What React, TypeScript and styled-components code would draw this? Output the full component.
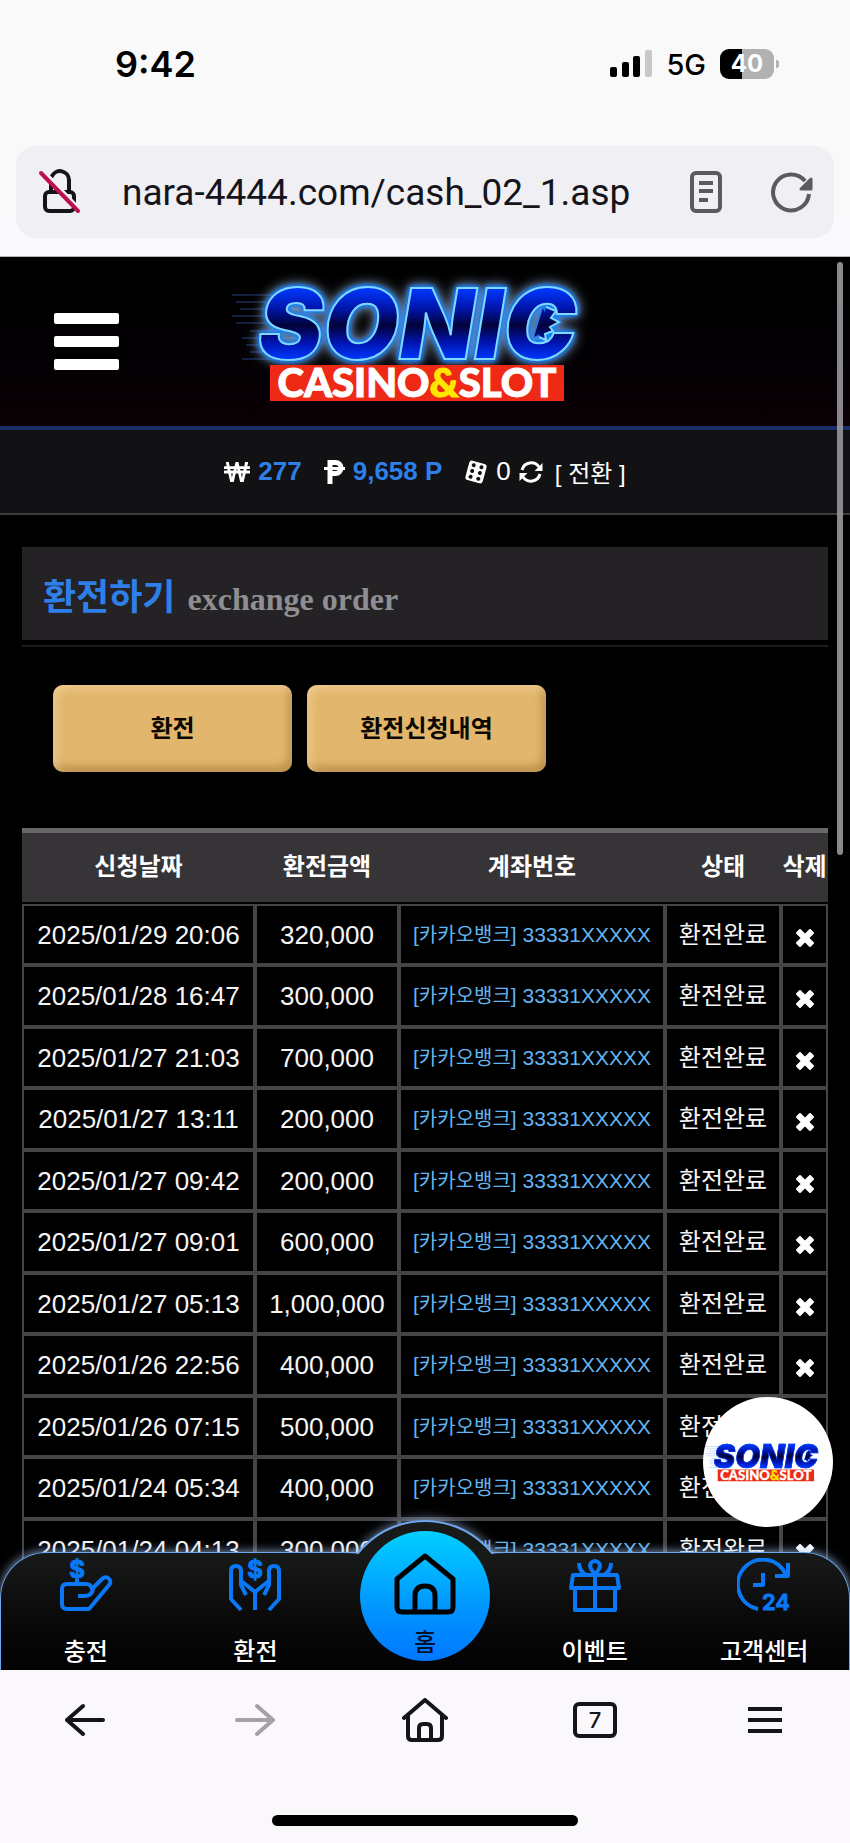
import React, { useId } from "react";
import styled, { createGlobalStyle } from "styled-components";
import { FaWonSign } from "react-icons/fa";

const GlobalStyle = createGlobalStyle`
  *, *::before, *::after { box-sizing: border-box; }
  body {
    margin: 0;
    background: #fbf8fc;
    font-family: "Liberation Sans", "Noto Sans CJK KR", sans-serif;
  }
  button, input { font: inherit; color: inherit; border: 0; padding: 0; margin: 0; background: none; }
  a { color: inherit; text-decoration: none; }
  svg { display: block; flex: none; }
`;

const Phone = styled.div`
  display: flex;
  flex-direction: column;
  min-height: 100vh;
`;

/* ---------- system status bar and address bar ---------- */

const TopChrome = styled.header`
  background: linear-gradient(#f9f9f9, #f9f9f9 70%, #fafafe);
  border-bottom: 1px solid #b4b3b8;
  font-family: Inter, "Noto Sans CJK KR", sans-serif;
`;

const StatusBar = styled.div`
  display: flex;
  align-items: center;
  justify-content: space-between;
  height: 128px;
  padding: 0 76px 0 115px;
  color: #000;
`;

const Clock = styled.time`
  font-size: 36px;
  font-weight: 600;
`;

const StatusIcons = styled.div`
  display: flex;
  align-items: center;
  gap: 14px;
`;

const Network = styled.span`
  font-size: 29px;
  font-weight: 500;
`;

const Battery = styled.div`
  position: relative;
  display: grid;
  place-items: center;
  width: 54px;
  height: 30px;
  border-radius: 9px;
  background: linear-gradient(90deg, #000 40%, #b1b1b1 40%);
  color: #fff;
  font-size: 24px;
  font-weight: 700;
  line-height: 30px;

  &::after {
    content: "";
    position: absolute;
    left: 56px;
    top: 11px;
    width: 3px;
    height: 8px;
    border-radius: 0 3px 3px 0;
    background: #b1b1b1;
  }
`;

const AddressRow = styled.div`
  padding: 18px 16px;
`;

const AddressBar = styled.form`
  display: flex;
  align-items: center;
  height: 92px;
  padding: 0 20px 0 22px;
  border-radius: 20px;
  background: #f0eff4;
  color: #5b5a60;
`;

const UrlInput = styled.input`
  flex: 1;
  min-width: 0;
  margin: 0 16px 0 40px;
  color: #15141a;
  font-family: Roboto, sans-serif;
  font-size: 37px;
  outline: 0;
`;

const IconButton = styled.button`
  display: grid;
  place-items: center;
  cursor: pointer;
`;

const ReaderButton = styled(IconButton)`
  margin-right: 48px;
`;

/* ---------- the casino page ---------- */

const Site = styled.div`
  position: relative;
  flex: 1;
  padding-bottom: 88px;
  background: #000;
  color: #fff;
  overflow: hidden;
`;

const ScrollThumb = styled.div`
  position: absolute;
  top: 5px;
  right: 7px;
  width: 6px;
  height: 42%;
  border-radius: 3px;
  background: rgba(160, 159, 163, 0.85);
  z-index: 5;
`;

const SiteHeader = styled.div`
  display: grid;
  grid-template-columns: 1fr auto 1fr;
  align-items: center;
  height: 173px;
  padding: 0 54px;
  background: linear-gradient(#000, #030003 60%, #0b0005);
  border-bottom: 4px solid #182c66;
`;

const MenuButton = styled.button`
  display: flex;
  flex-direction: column;
  justify-self: start;
  gap: 12px;
  width: 65px;
  cursor: pointer;
`;

const MenuBar = styled.span`
  height: 11px;
  border-radius: 2px;
  background: #fff;
`;

const AccountBar = styled.div`
  display: flex;
  align-items: center;
  justify-content: center;
  height: 85px;
  background: #121114;
  border-bottom: 2px solid #3c3b3e;
  font-size: 26px;
`;

const Balance = styled.span`
  display: flex;
  align-items: center;
  gap: 8px;
  margin-right: 22px;
`;

const Amount = styled.strong`
  color: #2e7fe8;
`;

const ConvertButton = styled.button`
  display: flex;
  align-items: center;
  gap: 12px;
  margin-left: -14px;
  font-size: 24px;
  cursor: pointer;
`;

const Content = styled.main`
  padding: 32px 22px 0;
`;

const TitlePanel = styled.div`
  display: flex;
  align-items: baseline;
  gap: 12px;
  padding: 24px 21px 16px;
  height: 93px;
  background: #242225;
`;

const Title = styled.h1`
  margin: 0;
  color: #2e7fe8;
  font-size: 36px;
  line-height: 53px;
  font-weight: 700;
`;

const Subtitle = styled.span`
  color: #8f8e91;
  font-family: "Liberation Serif", serif;
  font-size: 32px;
  font-weight: 700;
`;

const Rule = styled.hr`
  height: 2px;
  margin: 5px 0 38px;
  border: 0;
  background: #1c1b1d;
`;

const Tabs = styled.div`
  display: flex;
  gap: 15px;
  padding: 0 31px;
  margin-bottom: 56px;
`;

const TabButton = styled.button`
  flex: 0 1 239px;
  height: 87px;
  padding-bottom: 5px;
  border-radius: 10px;
  background: #e2b66c;
  box-shadow: inset 4px 4px 8px rgba(255, 225, 180, 0.5), inset -3px -5px 8px rgba(120, 80, 20, 0.4);
  color: #0b0804;
  font-size: 24px;
  font-weight: 700;
  cursor: pointer;
`;

const History = styled.table`
  width: 100%;
  table-layout: fixed;
  border-collapse: separate;
  border-spacing: 0;
`;

const HeadCell = styled.th<{ $width?: number }>`
  width: ${(p) => (p.$width ? `${p.$width}px` : "auto")};
  height: 76px;
  padding: 0 0 6px;
  border-top: 5px solid #69676a;
  border-bottom: 2px solid #000;
  background: #363437;
  font-size: 24px;
  white-space: nowrap;
`;

const Row = styled.tr`
  height: 61px;
  &:nth-child(even) { height: 62px; }
`;

const Cell = styled.td<{ $size?: number; $color?: string }>`
  padding: 0;
  border: 2px solid #464447;
  color: ${(p) => p.$color ?? "#f5f5f5"};
  font-size: ${(p) => p.$size ?? 26}px;
  line-height: 36px;
  text-align: center;
  white-space: nowrap;
`;

const Bank = styled.span`
  font-size: 20px;
`;

const DeleteButton = styled(IconButton)`
  width: 100%;
  padding-top: 6px;
`;

const ChatBadge = styled.a`
  position: absolute;
  right: 17px;
  bottom: 143px;
  display: grid;
  place-items: center;
  width: 130px;
  height: 130px;
  border-radius: 50%;
  background: #fff;
  z-index: 2;
`;

const Dock = styled.nav`
  position: absolute;
  left: 0;
  right: 0;
  bottom: 0;
  z-index: 3;
  display: grid;
  grid-template-columns: repeat(5, 1fr);
  justify-items: center;
  align-items: start;
  height: 118px;
  border: 1px solid #6ea6ee;
  border-bottom: 0;
  border-radius: 46px 46px 0 0;
  background: linear-gradient(#181a19, #0b0b0b 50%, #020103);
  box-shadow: 0 -1px 10px rgba(160, 195, 240, 0.75);
`;

/* Window above the dock edge that shows only the top arc of the bump. */
const BumpClip = styled.div`
  position: absolute;
  left: 50%;
  top: -47px;
  width: 200px;
  height: 48px;
  transform: translateX(-50%);
  overflow: hidden;
`;

const Bump = styled.div`
  width: 174px;
  height: 174px;
  margin: 14px auto 0;
  border: 2px solid #6ea6ee;
  border-radius: 50%;
  background: #181a19;
  box-shadow: 0 0 12px rgba(160, 195, 240, 0.75);
`;

const DockLink = styled.a`
  display: flex;
  flex-direction: column;
  align-items: center;
  gap: 20px;
  padding-top: 5px;
  color: #0a77f5;
`;

const DockLabel = styled.span`
  color: #fff;
  font-size: 24px;
  font-weight: 500;
  font-family: "Noto Sans CJK KR", sans-serif;
  line-height: 36px;
`;

const HomeLink = styled.a`
  position: relative;
  display: flex;
  flex-direction: column;
  align-items: center;
  gap: 8px;
  width: 130px;
  height: 130px;
  margin-top: -22px;
  padding-top: 22px;
  border-radius: 50%;
  background: linear-gradient(#00d0ff, #0090ff 65%, #0078ff);
  color: #000;

  ${DockLabel} { color: #03102c; }
`;

/* ---------- browser toolbar ---------- */

const BrowserBar = styled.footer`
  display: flex;
  flex-direction: column;
  justify-content: space-between;
  align-items: center;
  height: 173px;
  padding: 19px 0 17px;
  background: #fbf8fc;
  color: #15141a;
`;

const BrowserButtons = styled.div`
  display: grid;
  grid-template-columns: repeat(5, 1fr);
  width: 100%;
  height: 62px;
`;

const TabCount = styled.span`
  display: grid;
  place-items: center;
  width: 44px;
  height: 36px;
  border: 4px solid #15141a;
  border-radius: 6px;
  font-family: Inter, sans-serif;
  font-size: 22px;
  font-weight: 500;
`;

const HomeIndicator = styled.div`
  width: 36%;
  height: 11px;
  border-radius: 6px;
  background: #000;
`;

/* ---------- drawings ---------- */

const LogoArt = styled.svg`
  overflow: visible;
`;

const Neon = styled.g<{ $onLight?: boolean }>`
  stroke: ${(p) => (p.$onLight ? "#0a3ff0" : "#7fd9ff")};
  stroke-width: 2px;
  filter: ${(p) =>
    p.$onLight
      ? "drop-shadow(0 0 2px #3f7dff)"
      : "drop-shadow(0 0 2px #0a78ff) drop-shadow(0 0 2px #0a78ff) drop-shadow(0 0 6px rgba(160, 190, 225, 0.9))"};
`;

const Wordmark = styled.text`
  font: italic 900 98px Inter, sans-serif;
`;

const Tagline = styled.text`
  font: 900 40px Lato, sans-serif;
  fill: #fff;
  stroke: #fff;
  stroke-width: 1px;
`;

const Ampersand = styled.tspan`
  fill: #ffe600;
  stroke: #ffe600;
`;

function Logo({ width, onLight }: { width: number; onLight?: boolean }) {
  const id = useId();
  const lines = [24, 31, 38, 45, 52, 60, 67, 74, 81, 88];
  return (
    <LogoArt width={width} height={Math.round(width * 0.35)} viewBox="5 1 400 140" role="img" aria-label="Sonic Casino & Slot">
      <defs>
        <linearGradient id={`${id}f`} gradientUnits="userSpaceOnUse" x1="0" y1="16" x2="0" y2="90">
          <stop offset="0.05" stopColor="#0034f5" />
          <stop offset="0.3" stopColor="#0014a8" />
          <stop offset="0.52" stopColor="#000238" />
          <stop offset="0.75" stopColor="#0014b0" />
          <stop offset="0.95" stopColor="#0034f5" />
        </linearGradient>
      </defs>
      {lines.map((y, i) => (
        <path key={y} d={`M${12 + (i % 3) * 4 + (i > 4 ? 10 : 0)} ${y}h60`} stroke={onLight ? "#5a8cff" : "#27407c"} strokeWidth="1" />
      ))}
      <Neon fill={`url(#${id}f)`} $onLight={onLight}>
        <Wordmark x="38" y="88">SONIC</Wordmark>
        {/* spikes inside the bowl of the last letter */}
        <path d="M326 36l10 4-5 7 8 4-9 5 3 4-8 3 1 6-7-3" />
        <path d="M323 37l-9 29 8-4 6-12z" stroke="none" />
      </Neon>
      <path d="M50 94h294v36H50z" fill="#ee2a16" />
      <Tagline x="197" y="126" textAnchor="middle">
        CASINO<Ampersand>&amp;</Ampersand>SLOT
      </Tagline>
    </LogoArt>
  );
}

const SignalIcon = () => (
  <svg width="42" height="28" viewBox="0 0 42 28">
    <rect x="0" y="17" width="7" height="10" rx="2" />
    <rect x="12" y="12" width="7" height="15" rx="2" />
    <rect x="23" y="6" width="7" height="21" rx="2" />
    <rect x="35" y="0" width="7" height="27" rx="2" fill="#c8c8c8" />
  </svg>
);

const InsecureLockIcon = () => (
  <svg width="44" height="46" viewBox="0 0 44 46" fill="none" strokeWidth="4" strokeLinecap="round">
    <rect x="7" y="23" width="29" height="19" rx="4" stroke="#15141a" />
    <path d="M13 23v-8M14 7a9 9 0 0 1 17 4v12" stroke="#15141a" />
    <path d="M6 3l36 38" stroke="#f0eff4" strokeWidth="4" />
    <path d="M3 4l37 38" stroke="#bb1050" strokeWidth="4" />
  </svg>
);

const ReaderIcon = () => (
  <svg width="32" height="42" viewBox="0 0 32 42" fill="none" stroke="currentColor" strokeWidth="4">
    <rect x="2" y="2" width="28" height="38" rx="4" />
    <path d="M9 12h14M9 20h14M9 29h9" strokeWidth="4" />
  </svg>
);

const ReloadIcon = () => (
  <svg width="44" height="42" viewBox="0 0 44 42" fill="none">
    <path d="M35 10A18 18 0 1 0 39 23" stroke="currentColor" strokeWidth="4" />
    <path d="M41 8v10H31z" fill="currentColor" stroke="currentColor" strokeWidth="3" strokeLinejoin="round" />
  </svg>
);

const PointIcon = () => (
  <svg width="21" height="24" viewBox="0 0 21 24" fill="none" stroke="#fff">
    <path d="M6 24V2.500h5.500a5.500 5.500 0 0 1 0 11H6" strokeWidth="5" />
    <path d="M0 8.500h21" strokeWidth="3" />
  </svg>
);

const DiceIcon = () => (
  <svg width="24" height="24" viewBox="0 0 24 24">
    <g transform="rotate(15 12 12)">
      <rect x="3" y="2" width="18" height="20" rx="3" fill="#fff" />
      <g fill="#121114">
        {[6, 12, 18].map((y) => (
          <g key={y}>
            <circle cx="8" cy={y} r="2" />
            <circle cx="16" cy={y} r="2" />
          </g>
        ))}
      </g>
    </g>
  </svg>
);

const ConvertIcon = () => (
  <svg width="24" height="24" viewBox="0 0 24 24" fill="none" stroke="#fff" strokeWidth="3">
    <path d="M3 10a9.500 9.500 0 0 1 17-3M21 14a9.500 9.500 0 0 1-17 3" />
    <path d="M23.500 3v8h-8zM.5 21v-8h8z" fill="#fff" stroke="none" />
  </svg>
);

const CrossIcon = () => (
  <svg width="18" height="18" viewBox="0 0 18 18" fill="#fff" stroke="#fff" strokeWidth="2" strokeLinejoin="round">
    <path d="M1 4l3-3 5 5 5-5 3 3-5 5 5 5-3 3-5-5-5 5-3-3 5-5z" />
  </svg>
);

const strokeProps = { fill: "none", stroke: "currentColor", strokeWidth: 4, strokeLinejoin: "round" } as const;

const Dollar = ({ x }: { x: number }) => (
  <text x={x} y={20} textAnchor="middle" fill="currentColor" strokeWidth="1" fontFamily="Inter, sans-serif" fontSize="24" fontWeight="700">$</text>
);

const DepositIcon = () => (
  <svg width="54" height="54" viewBox="0 0 54 54" {...strokeProps}>
    <Dollar x={18} />
    <path d="M18 21v5M8 26h19q5 0 6 5L43 21q3-3 6-1 4 3 1 7L30 51H8q-5 0-5-5V31q0-5 5-5zM34 31q-1 7-9 7h-6" />
  </svg>
);

const WithdrawIcon = () => (
  <svg width="54" height="54" viewBox="0 0 54 54" {...strokeProps}>
    <Dollar x={27} />
    <path d="M13 52L3 41V13q0-5 5-5t5 5v14l5 10M12 22l15 12v18M41 52l10-11V13q0-5-5-5t-5 5v14l-5 10M42 22L27 34" />
  </svg>
);

const HomeIcon = () => (
  <svg width="62" height="62" viewBox="0 0 62 62" {...strokeProps} strokeWidth={5}>
    <path d="M3 26L31 3l28 23v28q0 5-5 5H8q-5 0-5-5zM21 59V43q0-10 10-10t10 10v16" />
  </svg>
);

const GiftIcon = () => (
  <svg width="54" height="54" viewBox="0 0 54 54" {...strokeProps}>
    <path d="M5 17h44l2 13H3zM7 30v22h40V30M27 17v35M27 16q-7-7-4-11 4-4 8 0 3 4-4 11zM11 5q0 9 8 12M43 5q0 9-8 12" />
  </svg>
);

const SupportIcon = () => (
  <svg width="54" height="54" viewBox="0 0 54 54" {...strokeProps}>
    <path d="M21 51A25 25 0 1 1 49 17M51 5v13H38M26 15v12H16" />
    <text x="39" y="52" textAnchor="middle" fill="currentColor" strokeWidth="1" fontFamily="Inter, sans-serif" fontSize="22" fontWeight="600">24</text>
  </svg>
);

const browserStroke = { fill: "none", stroke: "currentColor", strokeWidth: 4, strokeLinecap: "round", strokeLinejoin: "round" } as const;

const BackIcon = ({ forward }: { forward?: boolean }) => (
  <svg width="40" height="34" viewBox="0 0 40 34" {...browserStroke} color={forward ? "#a3a1a6" : "#15141a"}>
    <path d={forward ? "M2 17h36M22 3l16 14-16 14" : "M38 17H2M18 3L2 17l16 14"} />
  </svg>
);

const BrowserHomeIcon = () => (
  <svg width="46" height="44" viewBox="0 0 46 44" {...browserStroke}>
    <path d="M2 20L23 2l21 18M6 18v20q0 4 4 4h26q4 0 4-4V18M17 42V30q0-4 4-4h4q4 0 4 4v12" />
  </svg>
);

const MenuIcon = () => (
  <svg width="34" height="28" viewBox="0 0 34 28" stroke="currentColor" strokeWidth="4">
    <path d="M0 3h34M0 14h34M0 25h34" />
  </svg>
);

/* ---------- data ---------- */

const withdrawals: [string, string][] = [
  ["2025/01/29 20:06", "320,000"],
  ["2025/01/28 16:47", "300,000"],
  ["2025/01/27 21:03", "700,000"],
  ["2025/01/27 13:11", "200,000"],
  ["2025/01/27 09:42", "200,000"],
  ["2025/01/27 09:01", "600,000"],
  ["2025/01/27 05:13", "1,000,000"],
  ["2025/01/26 22:56", "400,000"],
  ["2025/01/26 07:15", "500,000"],
  ["2025/01/24 05:34", "400,000"],
  ["2025/01/24 04:13", "300,000"],
];

export default function App() {
  return (
    <Phone>
      <GlobalStyle />
      <TopChrome>
        <StatusBar>
          <Clock>9:42</Clock>
          <StatusIcons>
            <SignalIcon />
            <Network>5G</Network>
            <Battery>40</Battery>
          </StatusIcons>
        </StatusBar>
        <AddressRow>
          <AddressBar>
            <InsecureLockIcon />
            <UrlInput type="text" aria-label="Address" readOnly value="nara-4444.com/cash_02_1.asp" />
            <ReaderButton type="button" aria-label="Reader view"><ReaderIcon /></ReaderButton>
            <IconButton type="button" aria-label="Reload"><ReloadIcon /></IconButton>
          </AddressBar>
        </AddressRow>
      </TopChrome>

      <Site>
        <ScrollThumb />
        <SiteHeader>
          <MenuButton type="button" aria-label="메뉴">
            <MenuBar /><MenuBar /><MenuBar />
          </MenuButton>
          <Logo width={400} />
        </SiteHeader>
        <AccountBar>
          <Balance><FaWonSign size={26} /><Amount>277</Amount></Balance>
          <Balance><PointIcon /><Amount>9,658 P</Amount></Balance>
          <Balance><DiceIcon />0</Balance>
          <ConvertButton type="button"><ConvertIcon />[ 전환 ]</ConvertButton>
        </AccountBar>

        <Content>
          <TitlePanel>
            <Title>환전하기</Title>
            <Subtitle>exchange order</Subtitle>
          </TitlePanel>
          <Rule />
          <Tabs>
            <TabButton type="button">환전</TabButton>
            <TabButton type="button">환전신청내역</TabButton>
          </Tabs>
          <History>
            <thead>
              <tr>
                <HeadCell $width={233}>신청날짜</HeadCell>
                <HeadCell $width={144}>환전금액</HeadCell>
                <HeadCell>계좌번호</HeadCell>
                <HeadCell $width={116}>상태</HeadCell>
                <HeadCell $width={47}>삭제</HeadCell>
              </tr>
            </thead>
            <tbody>
              {withdrawals.map(([date, amount]) => (
                <Row key={date}>
                  <Cell>{date}</Cell>
                  <Cell>{amount}</Cell>
                  <Cell $size={21} $color="#62b5ee">[<Bank>카카오뱅크</Bank>] 33331XXXXX</Cell>
                  <Cell $size={24}>환전완료</Cell>
                  <Cell>
                    <DeleteButton type="button" aria-label="삭제"><CrossIcon /></DeleteButton>
                  </Cell>
                </Row>
              ))}
            </tbody>
          </History>
        </Content>

        <ChatBadge href="#chat"><Logo width={131} onLight /></ChatBadge>

        <Dock>
          <BumpClip><Bump /></BumpClip>
          <DockLink href="#deposit"><DepositIcon /><DockLabel>충전</DockLabel></DockLink>
          <DockLink href="#withdraw"><WithdrawIcon /><DockLabel>환전</DockLabel></DockLink>
          <HomeLink href="#home"><HomeIcon /><DockLabel>홈</DockLabel></HomeLink>
          <DockLink href="#events"><GiftIcon /><DockLabel>이벤트</DockLabel></DockLink>
          <DockLink href="#support"><SupportIcon /><DockLabel>고객센터</DockLabel></DockLink>
        </Dock>
      </Site>

      <BrowserBar>
        <BrowserButtons>
          <IconButton type="button" aria-label="Back"><BackIcon /></IconButton>
          <IconButton type="button" aria-label="Forward" disabled><BackIcon forward /></IconButton>
          <IconButton type="button" aria-label="Home"><BrowserHomeIcon /></IconButton>
          <IconButton type="button" aria-label="Tabs"><TabCount>7</TabCount></IconButton>
          <IconButton type="button" aria-label="Menu"><MenuIcon /></IconButton>
        </BrowserButtons>
        <HomeIndicator />
      </BrowserBar>
    </Phone>
  );
}
